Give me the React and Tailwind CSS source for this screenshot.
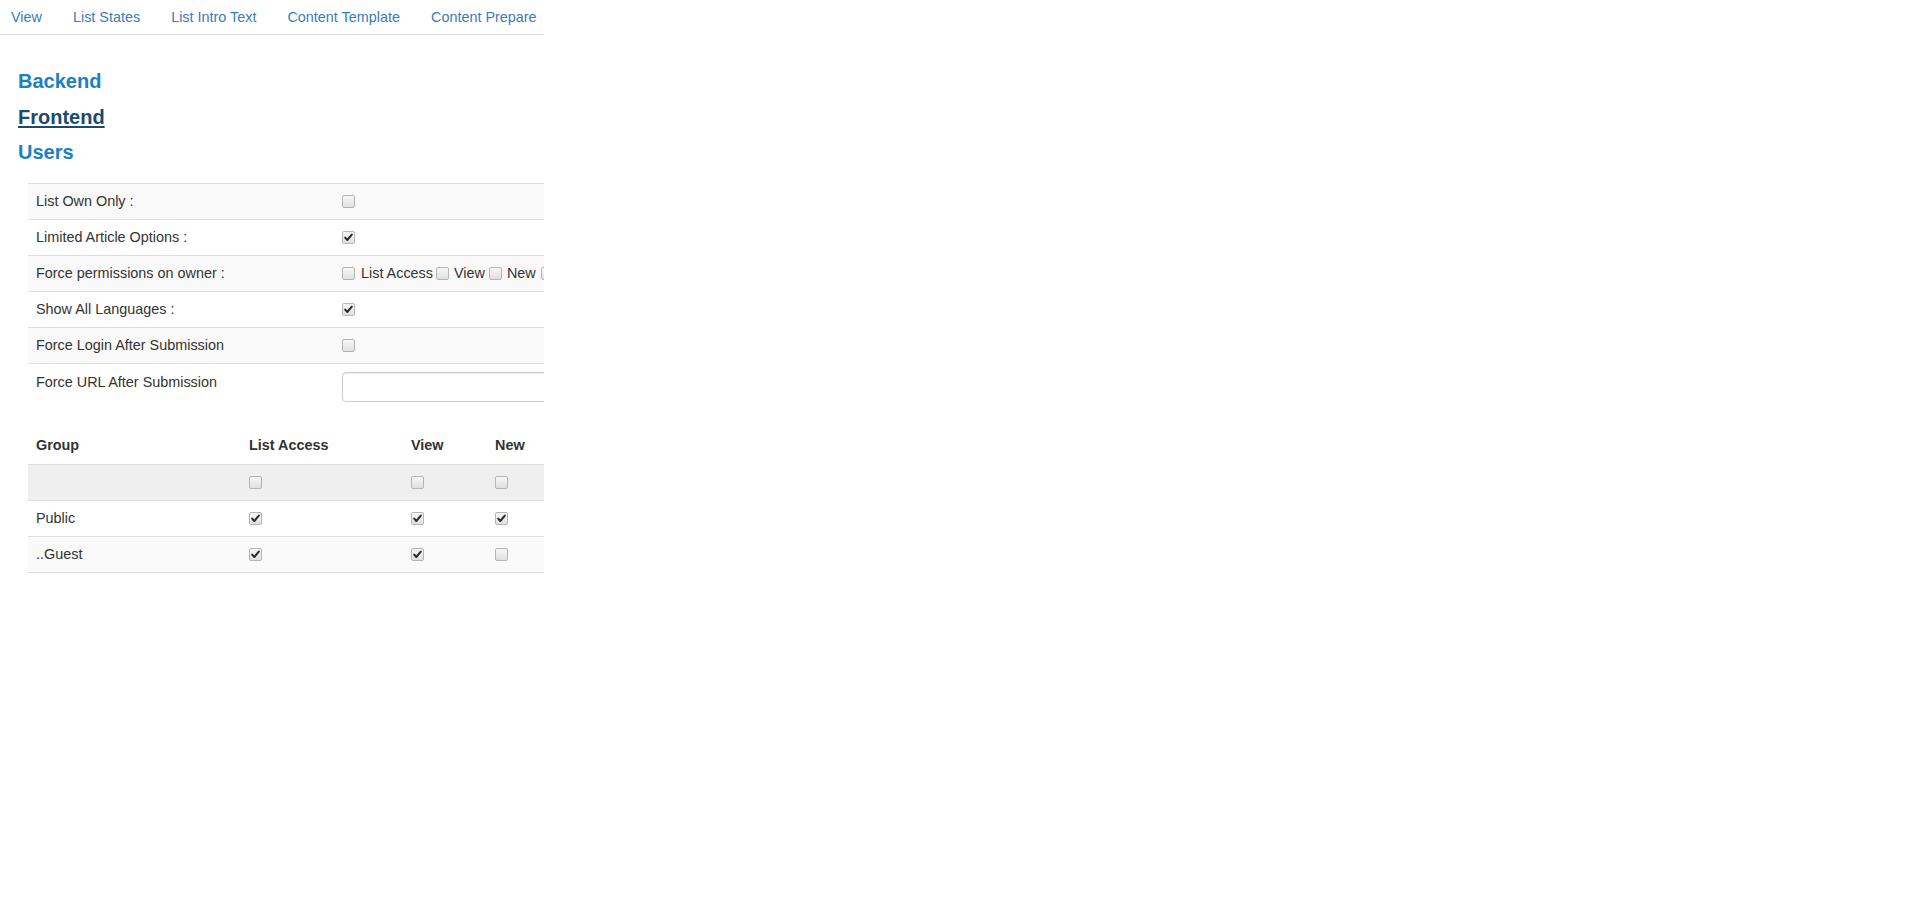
import React from "react";

const tabs = ["View", "List States", "List Intro Text", "Content Template", "Content Prepare"];

const Box = ({ checked }) => (
  <span className="inline-flex w-[13px] h-[13px] shrink-0 items-center justify-center rounded-[2px] border border-[#b5b5b5] bg-linear-to-b from-[#f7f7f7] to-[#e0e0e0]">
    {checked && (
      <svg width="11" height="11" viewBox="0 0 11 11">
        <path d="M2.2 5.6 L4.3 8 L8.8 2.6" fill="none" stroke="#2b2b2b" strokeWidth="2" strokeLinecap="round" strokeLinejoin="round" />
      </svg>
    )}
  </span>
);

const settings = [
  { label: "List Own Only :", value: <Box />, bg: "bg-[#f9f9f9]" },
  { label: "Limited Article Options :", value: <Box checked />, bg: "bg-white" },
  {
    label: "Force permissions on owner :",
    bg: "bg-[#f9f9f9]",
    value: (
      <div className="flex items-center whitespace-nowrap leading-[20px]">
        <Box />
        <span className="ml-[6px]">List Access</span>
        <span className="ml-[3px] flex items-center"><Box /></span>
        <span className="ml-[5px]">View</span>
        <span className="ml-[4px] flex items-center"><Box /></span>
        <span className="ml-[5px]">New</span>
        <span className="ml-[5px] flex items-center"><Box /></span>
      </div>
    ),
  },
  { label: "Show All Languages :", value: <Box checked />, bg: "bg-white" },
  { label: "Force Login After Submission", value: <Box />, bg: "bg-[#f9f9f9]" },
];

const groups = [
  { name: "", bg: "bg-[#efefef]", vals: [false, false, false] },
  { name: "Public", bg: "bg-white", vals: [true, true, true] },
  { name: "..Guest", bg: "bg-[#f9f9f9]", vals: [true, true, false] },
];

export default function App() {
  return (
    <div className="w-[544px] overflow-hidden bg-white text-[14.4px] text-[#333] font-['Liberation_Sans',Arial,sans-serif]">
      {/* tabs */}
      <div className="flex h-[35px] items-center gap-[31px] border-b border-[#dddddd] pl-[11px] text-[#3a7cbc] whitespace-nowrap">
        {tabs.map((t) => (
          <a key={t} className="leading-[20px] cursor-pointer">{t}</a>
        ))}
      </div>

      {/* sections */}
      <div className="pt-[29px] pl-[18px] text-[20px] font-bold leading-[35.5px]">
        <div className="text-[#1a80c2]">Backend</div>
        <div className="text-[#1c4a6e] underline underline-offset-[2px]">Frontend</div>
        <div className="text-[#1a80c2]">Users</div>
      </div>

      {/* settings table */}
      <div className="ml-[28px] mt-[12px] w-[700px]">
        {settings.map((s) => (
          <div key={s.label} className={`grid grid-cols-[306px_1fr] h-[36px] items-center border-t border-[#dddddd] ${s.bg}`}>
            <div className="px-[8px] leading-[20px]">{s.label}</div>
            <div className="px-[8px] flex items-center">{s.value}</div>
          </div>
        ))}
        <div className="grid grid-cols-[306px_1fr] items-start border-t border-[#dddddd] bg-white py-[8px]">
          <div className="px-[8px] leading-[20px]">Force URL After Submission</div>
          <div className="px-[8px]">
            <input type="text" className="h-[30px] w-[340px] rounded-[4px] border border-[#cccccc] px-[8px] shadow-[inset_0_1px_1px_rgba(0,0,0,0.075)] outline-none" />
          </div>
        </div>
      </div>

      {/* groups table */}
      <div className="ml-[28px] mt-[18px] w-[700px]">
        <div className="grid grid-cols-[213px_162px_84px_1fr] h-[36px] items-center font-bold">
          <div className="px-[8px]">Group</div>
          <div className="px-[8px]">List Access</div>
          <div className="px-[8px]">View</div>
          <div className="px-[8px]">New</div>
        </div>
        {groups.map((g, i) => (
          <div
            key={i}
            className={`grid grid-cols-[213px_162px_84px_1fr] items-center border-t border-[#dddddd] ${g.bg} ${i === groups.length - 1 ? "h-[37px] border-b" : "h-[36px]"}`}
          >
            <div className="px-[8px] leading-[20px]">{g.name}</div>
            {g.vals.map((v, j) => (
              <div key={j} className="px-[8px] flex items-center">
                <Box checked={v} />
              </div>
            ))}
          </div>
        ))}
      </div>
    </div>
  );
}
